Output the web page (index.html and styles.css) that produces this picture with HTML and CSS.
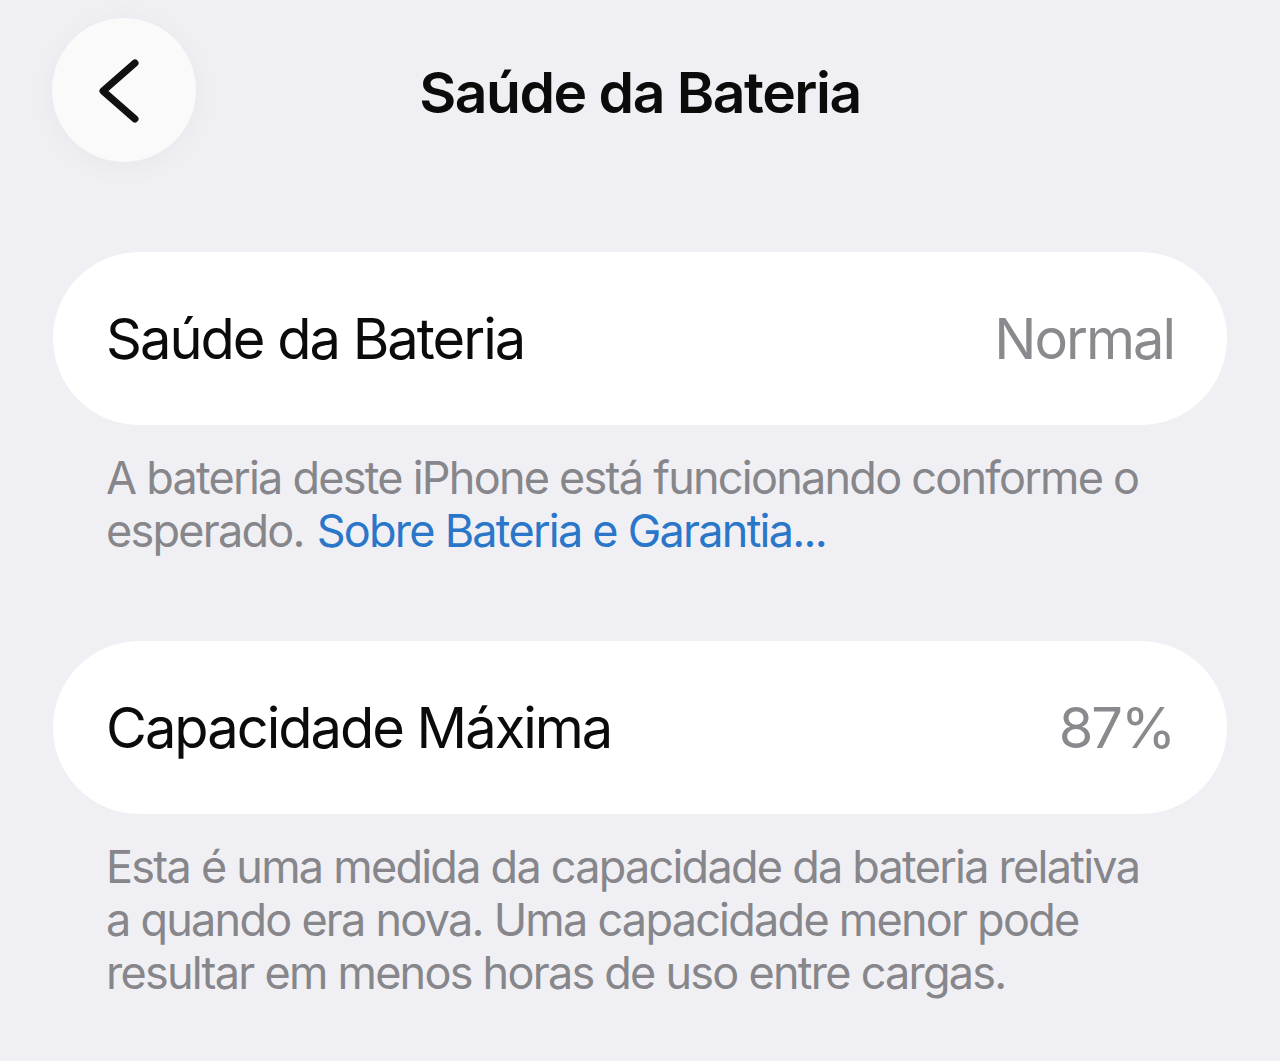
FILE: index.html
```html
<html>
    <head>
        <link rel="stylesheet" href="styles.css">
    </head>
    <body>
        <div class="nav">
            <div class="backBtn">
                <svg width="144" height="144" viewBox="0 0 144 144">
                    <path d="M83 45 L51 73 L83 101" fill="none" stroke="#111" stroke-width="7" stroke-linecap="round" stroke-linejoin="round"/>
                </svg>
            </div>
            <h1 class="title">Saúde da Bateria</h1>
            <div></div>
        </div>

        <div class="card first">
            <span class="label">Saúde da Bateria</span>
            <span class="value">Normal</span>
        </div>
        <p class="footer">
            A bateria deste iPhone está funcionando conforme o esperado. <a href="#">Sobre Bateria e Garantia...</a>
        </p>

        <div class="card">
            <span class="label">Capacidade Máxima</span>
            <span class="value">87%</span>
        </div>
        <p class="footer">
            Esta é uma medida da capacidade da bateria relativa a quando era nova. Uma capacidade menor pode resultar em menos horas de uso entre cargas.
        </p>
    </body>
</html>
```
FILE: styles.css
```css
*{
    font-family: Inter, 'Noto Sans', sans-serif;
}
body{
    margin: 0px;
    background: #f0f0f4;
    color: #0b0b0c;
}
.nav{
    display: grid;
    grid-template-columns: 144px 1fr 144px;
    align-items: center;
    padding: 18px 52px;
}
.backBtn{
    width: 144px;
    height: 144px;
    border-radius: 50%;
    background: #fafafb;
    box-shadow: 0px 4px 30px rgba(0,0,0,0.04);
}
.backBtn svg{
    display: block;
}
.title{
    margin: 0px;
    text-align: center;
    font-size: 57px;
    font-weight: 600;
    letter-spacing: -1.5px;
    transform: translateY(2px);
}
.card{
    display: flex;
    justify-content: space-between;
    align-items: center;
    height: 173px;
    margin: 0px 53px;
    padding: 0px 53px;
    border-radius: 87px;
    background: #ffffff;
    font-size: 56px;
    letter-spacing: -2px;
}
.card.first{
    margin-top: 72px;
}
.value{
    color: #8a8a8e;
}
.footer{
    margin: 26px 120px 84px 106px;
    font-size: 45px;
    line-height: 53px;
    letter-spacing: -1.75px;
    color: #86868b;
}
.footer a{
    color: #2a77c9;
    text-decoration: none;
    margin-left: 2px;
}
```
